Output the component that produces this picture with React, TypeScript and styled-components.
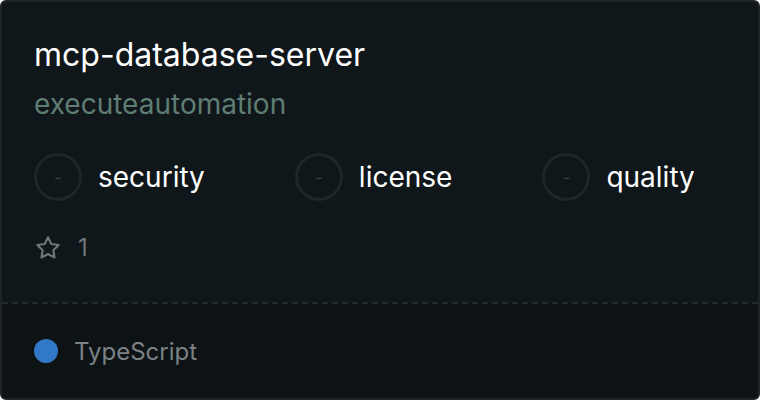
import React from 'react';
import styled, { createGlobalStyle } from 'styled-components';

const GlobalStyle = createGlobalStyle`
  html, body {
    margin: 0;
    padding: 0;
    background: #ffffff;
  }
  body {
    font-family: Inter, "Noto Sans", sans-serif;
  }
`;

const Card = styled.div`
  box-sizing: border-box;
  width: 760px;
  height: 400px;
  display: flex;
  flex-direction: column;
  background-color: #10171a;
  border: 2px solid #1e2427;
  border-radius: 6px;
  overflow: hidden;
`;

const Body = styled.div`
  flex: 1;
  display: flex;
  flex-direction: column;
  padding: 34px 32px 0;
`;

const Title = styled.div`
  color: #ffffff;
  font-size: 32px;
  line-height: 38px;
`;

const Owner = styled.div`
  margin-top: 13px;
  color: #5f7d73;
  font-size: 28px;
  line-height: 34px;
`;

const Scores = styled.div`
  display: flex;
  gap: 90px;
  margin-top: 32px;
`;

const Score = styled.div`
  display: flex;
  align-items: center;
  gap: 16px;
`;

const Ring = styled.div`
  box-sizing: border-box;
  width: 48px;
  height: 48px;
  border-radius: 50%;
  border: 3px solid #1f2629;
  display: flex;
  align-items: center;
  justify-content: center;
  color: #3a4246;
  font-size: 16px;
`;

const ScoreLabel = styled.span`
  color: #ffffff;
  font-size: 28px;
  line-height: 48px;
`;

const Stars = styled.div`
  display: flex;
  align-items: center;
  gap: 16px;
  margin-top: 33px;
  color: #6e767a;
  font-size: 24px;
  line-height: 26px;
`;

const Footer = styled.div`
  height: 96px;
  box-sizing: border-box;
  border-top: 2px dashed #232a2e;
  background-color: #0d1215;
  display: flex;
  align-items: center;
  gap: 16px;
  padding: 0 32px;
`;

const LangDot = styled.span<{ $color: string }>`
  width: 24px;
  height: 24px;
  border-radius: 50%;
  background-color: ${({ $color }) => $color};
`;

const LangName = styled.span`
  color: #7b8286;
  font-size: 24px;
`;

const StarIcon = () => (
  <svg width="28" height="28" viewBox="0 0 24 24" fill="none" stroke="currentColor" strokeWidth="1.8" strokeLinejoin="round">
    <path d="M12 2.8l2.8 5.7 6.3.9-4.55 4.45 1.07 6.27L12 17.15l-5.62 2.97 1.07-6.27L2.9 9.4l6.3-.9z" />
  </svg>
);

const scores = ['security', 'license', 'quality'];

export default function App() {
  return (
    <>
      <GlobalStyle />
      <Card>
        <Body>
          <Title>mcp-database-server</Title>
          <Owner>executeautomation</Owner>
          <Scores>
            {scores.map((s) => (
              <Score key={s}>
                <Ring>-</Ring>
                <ScoreLabel>{s}</ScoreLabel>
              </Score>
            ))}
          </Scores>
          <Stars>
            <StarIcon />
            <span>1</span>
          </Stars>
        </Body>
        <Footer>
          <LangDot $color="#3178c6" />
          <LangName>TypeScript</LangName>
        </Footer>
      </Card>
    </>
  );
}
